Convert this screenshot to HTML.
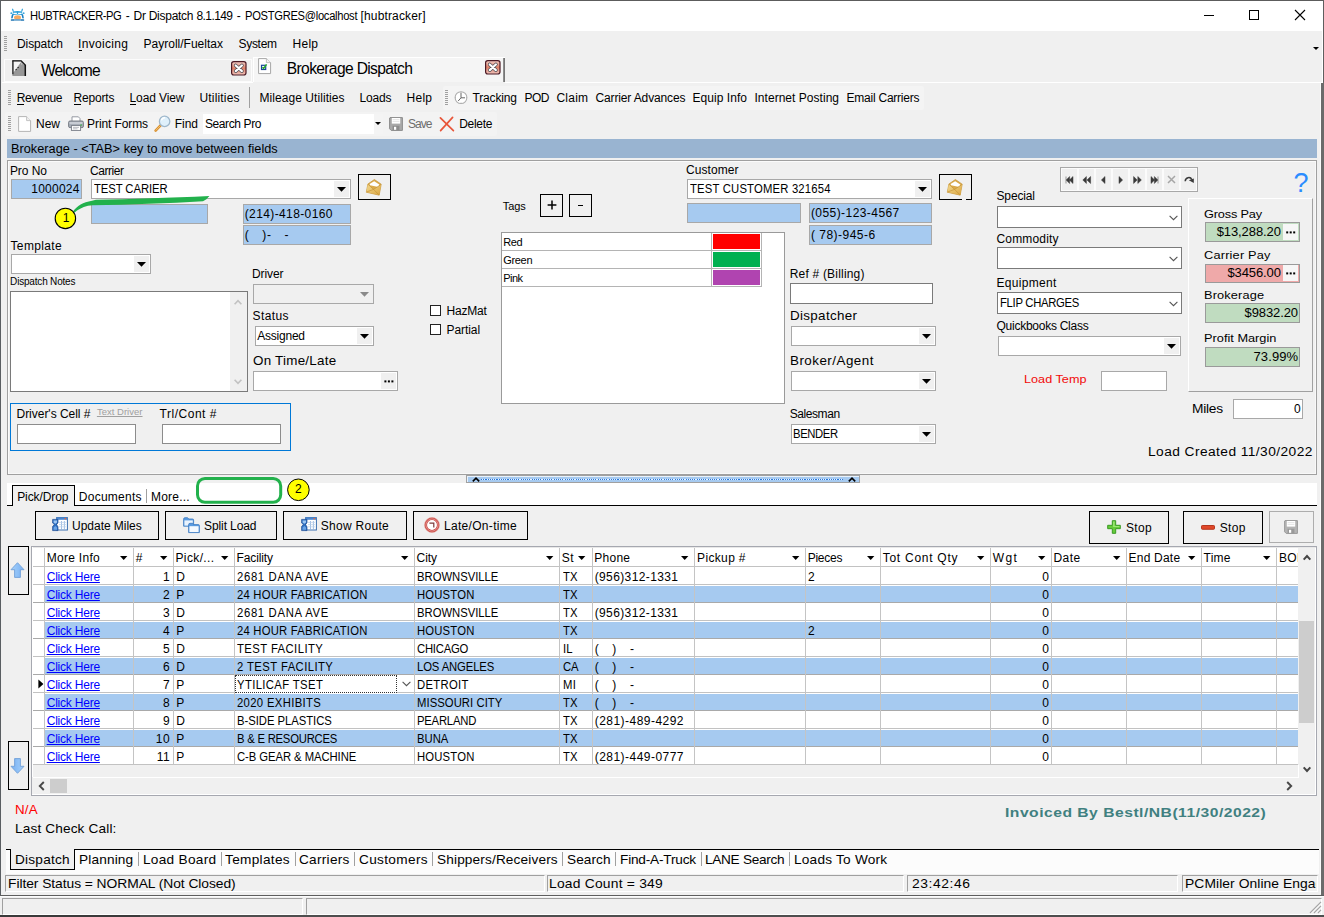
<!DOCTYPE html>
<html><head><meta charset="utf-8"><title>Dr Dispatch</title><style>html,body{margin:0;padding:0}
body{width:1324px;height:917px;overflow:hidden;position:relative;background:#f0f0f0;font-family:"Liberation Sans",sans-serif}
.b{position:absolute;box-sizing:border-box;display:block}
.t{position:absolute;white-space:pre;font-family:"Liberation Sans",sans-serif}
svg{overflow:visible}</style></head><body>
<div class="b " style="left:0px;top:0px;width:1324px;height:917px;background:#f0f0f0;"></div>
<div class="b " style="left:0px;top:0px;width:1324px;height:31px;background:#fff;"></div>
<div class="b " style="left:0px;top:0px;width:1324px;height:1px;background:#5c5c5c;"></div>
<div class="b " style="left:0px;top:0px;width:1.3px;height:896px;background:#5a5e62;"></div>
<div class="b " style="left:1323px;top:0px;width:1px;height:82px;background:#5f5f5f;"></div>
<div class="b " style="left:1321px;top:82px;width:3px;height:814px;background:#6b6b6b;"></div>
<div class="b " style="left:1322px;top:1px;width:1px;height:81px;background:#fff;"></div>
<div class="b " style="left:1320.2px;top:82px;width:0.8px;height:812px;background:#fafafa;"></div>
<svg class="b" style="left:10px;top:8px" width="15" height="14" viewBox="0 0 15 14">
<path d="M3.2 3.2L2.6 1.2M11.8 3.2L12.4 1.2" stroke="#2a9fd8" stroke-width="1.2" stroke-linecap="round"/>
<path d="M3 3.6Q7.5 2.2 12 3.6L12.6 7.2Q7.5 6 2.4 7.2Z" fill="#2a9fd8"/>
<path d="M3.4 4.7H6.9V6.1H3.3ZM8.1 4.7H11.6L11.7 6.1H8.1Z" fill="#fff"/>
<circle cx="1.3" cy="5.2" r="0.9" fill="#3aa6dc"/><circle cx="13.7" cy="5.2" r="0.9" fill="#3aa6dc"/>
<path d="M2.6 7L2 9.6M12.4 7L13 9.6" stroke="#1b7fc0" stroke-width="1.6" stroke-linecap="round"/>
<ellipse cx="7.5" cy="9.6" rx="3.5" ry="2.4" fill="#f5a960"/>
<path d="M1.6 12H13.4" stroke="#1a72b2" stroke-width="1.7" stroke-linecap="round"/>
<path d="M4 12.1H11" stroke="#9cc4e0" stroke-width="1.2"/>
</svg>
<span class="t" style="font-size:12px;line-height:16px;top:8.2px;color:#000;letter-spacing:-0.442px;left:30px;transform:scaleX(0.93);transform-origin:0 50%;">HUBTRACKER-PG</span>
<span class="t" style="font-size:12px;line-height:16px;top:8.2px;color:#000;left:125.8px;">-</span>
<span class="t" style="font-size:12px;line-height:16px;top:8.2px;color:#000;letter-spacing:-0.268px;left:133.5px;">Dr Dispatch</span>
<span class="t" style="font-size:12px;line-height:16px;top:8.2px;color:#000;letter-spacing:-0.590px;left:196.5px;">8.1.149</span>
<span class="t" style="font-size:12px;line-height:16px;top:8.2px;color:#000;left:236.7px;">-</span>
<span class="t" style="font-size:12px;line-height:16px;top:8.2px;color:#000;letter-spacing:-0.309px;left:244.5px;transform:scaleX(0.93);transform-origin:0 50%;">POSTGRES@localhost</span>
<span class="t" style="font-size:12px;line-height:16px;top:8.2px;color:#000;letter-spacing:0.149px;left:360.5px;">[hubtracker]</span>
<div class="b " style="left:1204px;top:15px;width:10px;height:1px;background:#000;"></div>
<div class="b " style="left:1249px;top:10px;width:10px;height:10px;border:1px solid #000;"></div>
<svg class="b" style="left:1294px;top:9px" width="12" height="12" viewBox="0 0 12 12"><path d="M1 1L11 11M11 1L1 11" stroke="#000" stroke-width="1.1"/></svg>
<div class="b " style="left:4px;top:36px;width:3px;height:15px;background:repeating-linear-gradient(to bottom,#a0a0a0 0,#a0a0a0 1px,transparent 1px,transparent 2px);"></div>
<span class="t" style="font-size:12px;line-height:16px;top:35.6px;color:#000;letter-spacing:-0.098px;left:17px;">Dispatch</span>
<span class="t" style="font-size:12px;line-height:16px;top:35.6px;color:#000;letter-spacing:0.330px;left:78px;">Invoicing</span>
<span class="t" style="font-size:12px;line-height:16px;top:35.6px;color:#000;letter-spacing:0.010px;left:143.5px;">Payroll/Fueltax</span>
<span class="t" style="font-size:12px;line-height:16px;top:35.6px;color:#000;letter-spacing:-0.302px;left:238.5px;">System</span>
<span class="t" style="font-size:12px;line-height:16px;top:35.6px;color:#000;letter-spacing:0.273px;left:292.5px;">Help</span>
<div class="b " style="left:78.5px;top:49.6px;width:3.5px;height:1px;background:#000;"></div>
<svg class="b" style="left:1312.5px;top:47px" width="6" height="3" viewBox="0 0 6 3"><path d="M0 0H6L3 3Z" fill="#000"/></svg>
<div class="b " style="left:4px;top:58.6px;width:248.4px;height:23.6px;background:#efefef;border:1px solid #fcfcfc;"></div>
<div class="b " style="left:253px;top:57px;width:252px;height:25px;background:#f5f5f5;border-top:1px solid #fff;border-left:1px solid #fff;"></div>
<div class="b " style="left:503.4px;top:57.6px;width:2px;height:24.4px;background:linear-gradient(90deg,#9a9a9a,#6a6a6a);"></div>
<div class="b " style="left:2px;top:81.5px;width:251px;height:1px;background:#fff;"></div>
<div class="b " style="left:505px;top:81.5px;width:818px;height:1px;background:#fff;"></div>
<svg class="b" style="left:12px;top:60px" width="15" height="17" viewBox="0 0 15 17"><path d="M0.4 16V0.6H9L13.9 5.3V16Z" fill="#979797"/>
<path d="M1.5 1.6H9.4L1.5 12.6Z" fill="#f4f4f4"/>
<path d="M1.5 1.7H9" stroke="#f2f2f2" stroke-width="0.9"/>
<path d="M0.9 0.4V14.2" stroke="#111" stroke-width="1.1"/>
<path d="M0.4 0.9H9.2L13.4 5.1" fill="none" stroke="#111" stroke-width="1.3"/>
<path d="M13.3 4.8V16" stroke="#111" stroke-width="1.5"/>
<rect x="3.6" y="9" width="1.1" height="1.1" fill="#111"/><rect x="5.6" y="7" width="1.1" height="1.1" fill="#111"/>
<rect x="9.2" y="3.4" width="1" height="1" fill="#eee"/></svg>
<span class="t" style="font-size:15.6px;line-height:20px;top:61px;color:#000;letter-spacing:-0.822px;left:40.9px;">Welcome</span>
<svg class="b" style="left:231px;top:60.6px" width="16" height="15" viewBox="0 0 16 15"><defs><linearGradient id="cx231" x1="0" x2="0" y1="0" y2="1"><stop offset="0" stop-color="#f3cfc8"/><stop offset="0.5" stop-color="#de8068"/><stop offset="1" stop-color="#f0c4bc"/></linearGradient></defs>
<rect x="0.6" y="0.6" width="14.4" height="13.4" rx="2.2" fill="url(#cx231)" stroke="#4c1a24" stroke-width="1.2"/>
<path d="M4.7 4.5L10.9 10.1M10.9 4.5L4.7 10.1" stroke="#4a4a52" stroke-width="3.6" stroke-linecap="round"/>
<path d="M4.7 4.5L10.9 10.1M10.9 4.5L4.7 10.1" stroke="#fff" stroke-width="2.2" stroke-linecap="round"/></svg>
<svg class="b" style="left:485px;top:59.8px" width="16" height="15" viewBox="0 0 16 15"><defs><linearGradient id="cx485" x1="0" x2="0" y1="0" y2="1"><stop offset="0" stop-color="#f3cfc8"/><stop offset="0.5" stop-color="#de8068"/><stop offset="1" stop-color="#f0c4bc"/></linearGradient></defs>
<rect x="0.6" y="0.6" width="14.4" height="13.4" rx="2.2" fill="url(#cx485)" stroke="#4c1a24" stroke-width="1.2"/>
<path d="M4.7 4.5L10.9 10.1M10.9 4.5L4.7 10.1" stroke="#4a4a52" stroke-width="3.6" stroke-linecap="round"/>
<path d="M4.7 4.5L10.9 10.1M10.9 4.5L4.7 10.1" stroke="#fff" stroke-width="2.2" stroke-linecap="round"/></svg>
<svg class="b" style="left:258px;top:58px" width="14" height="16.4" viewBox="0 0 14 16.4"><path d="M0.6 0.6H8.4L12.6 4.6V15.6H0.6Z" fill="#fff" stroke="#a6a6a6" stroke-width="1"/>
<path d="M8.4 0.6V4.6H12.6" fill="#f2f2f2" stroke="#b4b4b4" stroke-width="0.8"/>
<rect x="3.5" y="7.3" width="4.2" height="4.2" fill="#fff" stroke="#18449a" stroke-width="1.2"/>
<path d="M4.4 9.2L5.6 10.4L8.6 6.4" fill="none" stroke="#25aa2a" stroke-width="1.5"/></svg>
<span class="t" style="font-size:15.6px;line-height:20px;top:59px;color:#000;letter-spacing:-0.642px;left:286.8px;">Brokerage Dispatch</span>
<div class="b " style="left:443px;top:85.6px;width:481px;height:24.2px;background:#f4f4f4;border-radius:2px;"></div>
<div class="b " style="left:8px;top:90px;width:3px;height:15px;background:repeating-linear-gradient(to bottom,#a0a0a0 0,#a0a0a0 1px,transparent 1px,transparent 2px);"></div>
<div class="b " style="left:445px;top:90px;width:3px;height:15px;background:repeating-linear-gradient(to bottom,#a0a0a0 0,#a0a0a0 1px,transparent 1px,transparent 2px);"></div>
<span class="t" style="font-size:12px;line-height:16px;top:89.7px;color:#000;letter-spacing:-0.373px;left:16.7px;">Revenue</span>
<span class="t" style="font-size:12px;line-height:16px;top:89.7px;color:#000;letter-spacing:-0.170px;left:73.5px;">Reports</span>
<span class="t" style="font-size:12px;line-height:16px;top:89.7px;color:#000;letter-spacing:-0.103px;left:129.5px;">Load View</span>
<span class="t" style="font-size:12px;line-height:16px;top:89.7px;color:#000;letter-spacing:0.166px;left:199.5px;">Utilities</span>
<span class="t" style="font-size:12px;line-height:16px;top:89.7px;color:#000;letter-spacing:0.061px;left:259.5px;">Mileage Utilities</span>
<span class="t" style="font-size:12px;line-height:16px;top:89.7px;color:#000;letter-spacing:-0.174px;left:359.5px;">Loads</span>
<span class="t" style="font-size:12px;line-height:16px;top:89.7px;color:#000;letter-spacing:0.273px;left:406.5px;">Help</span>
<span class="t" style="font-size:12px;line-height:16px;top:89.7px;color:#000;letter-spacing:-0.153px;left:472.5px;">Tracking</span>
<span class="t" style="font-size:12px;line-height:16px;top:89.7px;color:#000;letter-spacing:-0.502px;left:524.5px;">POD</span>
<span class="t" style="font-size:12px;line-height:16px;top:89.7px;color:#000;letter-spacing:0.208px;left:556.5px;">Claim</span>
<span class="t" style="font-size:12px;line-height:16px;top:89.7px;color:#000;letter-spacing:-0.136px;left:595.5px;">Carrier Advances</span>
<span class="t" style="font-size:12px;line-height:16px;top:89.7px;color:#000;letter-spacing:0.051px;left:692.5px;">Equip Info</span>
<span class="t" style="font-size:12px;line-height:16px;top:89.7px;color:#000;letter-spacing:0.030px;left:754.5px;">Internet Posting</span>
<span class="t" style="font-size:12px;line-height:16px;top:89.7px;color:#000;letter-spacing:-0.231px;left:846.5px;">Email Carriers</span>
<div class="b " style="left:17.3px;top:103.6px;width:7px;height:1px;background:#000;"></div>
<div class="b " style="left:74.2px;top:103.6px;width:7px;height:1px;background:#000;"></div>
<div class="b " style="left:130.2px;top:103.6px;width:5.5px;height:1px;background:#000;"></div>
<div class="b " style="left:249px;top:87px;width:1px;height:21px;background:#a0a0a0;"></div>
<svg class="b" style="left:454px;top:90px" width="14" height="15" viewBox="0 0 14 15"><circle cx="7" cy="7.6" r="5.9" fill="#fff" stroke="#b0b0b0" stroke-width="1.1"/>
<path d="M7 2.8V7.8H11M7 7.8L4.2 11" fill="none" stroke="#666" stroke-width="1"/>
<path d="M7 1.8V2.6M7 12.6V13.4M1.2 7.6H2M12 7.6H12.8" stroke="#aaa" stroke-width="0.8"/></svg>
<div class="b " style="left:5px;top:111.6px;width:492px;height:24.6px;background:#f3f3f3;border-radius:2px;"></div>
<div class="b " style="left:8px;top:116px;width:3px;height:15px;background:repeating-linear-gradient(to bottom,#a0a0a0 0,#a0a0a0 1px,transparent 1px,transparent 2px);"></div>
<svg class="b" style="left:18px;top:116px" width="14" height="16" viewBox="0 0 14 16"><path d="M0.6 0.6H8.6L12.6 4.6V15.4H0.6Z" fill="#fff" stroke="#b4b4b4" stroke-width="1"/>
<path d="M8.6 0.6V4.6H12.6" fill="#f0f0f0" stroke="#bcbcbc" stroke-width="0.9"/></svg>
<span class="t" style="font-size:12px;line-height:16px;top:115.8px;color:#000;letter-spacing:-0.053px;left:36.1px;">New</span>
<svg class="b" style="left:67.5px;top:116px" width="16" height="15" viewBox="0 0 16 15"><path d="M4 0.8H10.4L12 2.6V6H4Z" fill="#fff" stroke="#8a8f98" stroke-width="0.9"/>
<rect x="0.6" y="5" width="14.8" height="6.6" rx="1.4" fill="#a8aeb8" stroke="#70757e" stroke-width="0.9"/>
<rect x="1.6" y="6" width="12.8" height="2" fill="#c8ccd4"/>
<rect x="3.4" y="9.6" width="9.2" height="4.8" fill="#fff" stroke="#777c86" stroke-width="0.9"/>
<path d="M5 11.4H11M5 12.8H9.5" stroke="#a0a4ac" stroke-width="0.7"/>
<rect x="12.4" y="8.4" width="1.5" height="1.3" fill="#3cb44a"/></svg>
<span class="t" style="font-size:12px;line-height:16px;top:115.8px;color:#000;letter-spacing:-0.100px;left:87.1px;">Print Forms</span>
<svg class="b" style="left:154px;top:115px" width="17" height="17" viewBox="0 0 17 17"><path d="M6.8 10.2L1.6 15.6" stroke="#d9902f" stroke-width="2.6" stroke-linecap="round"/>
<path d="M6.2 10.8L2 15.2" stroke="#f2c070" stroke-width="1" stroke-linecap="round"/>
<circle cx="10.6" cy="6.4" r="5.2" fill="#dff0fb" stroke="#9fb8cc" stroke-width="1.3"/>
<path d="M7.4 5.4A3.6 3.6 0 0 1 11 2.8" fill="none" stroke="#fff" stroke-width="1.4"/></svg>
<span class="t" style="font-size:12px;line-height:16px;top:115.8px;color:#000;letter-spacing:-0.081px;left:174.8px;">Find</span>
<div class="b " style="left:202.6px;top:114px;width:171.4px;height:19.5px;background:#fff;"></div>
<div class="b " style="left:374px;top:114px;width:9.4px;height:19.5px;background:#f4f4f4;"></div>
<span class="t" style="font-size:12px;line-height:16px;top:115.8px;color:#000;letter-spacing:-0.381px;left:204.9px;">Search Pro</span>
<svg class="b" style="left:375.4px;top:122.1px" width="6" height="3" viewBox="0 0 6 3"><path d="M0 0H6L3 3Z" fill="#000"/></svg>
<svg class="b" style="left:389px;top:116.5px" width="14" height="14" viewBox="0 0 14 14"><path d="M1 0.6H13.4V13.4H2.2L0.6 11.8V1Z" fill="#a9a9a9" stroke="#8c8c8c" stroke-width="1"/>
<rect x="2.8" y="1" width="8.4" height="5.6" fill="#fff"/>
<path d="M3.6 2.6H10.4M3.6 4.4H10.4" stroke="#dedede" stroke-width="0.8"/>
<rect x="3.6" y="8.8" width="6.8" height="4.6" fill="#8c8c8c"/><rect x="5" y="9.8" width="2.2" height="3" fill="#fff"/></svg>
<span class="t" style="font-size:12px;line-height:16px;top:115.8px;color:#6d6d6d;letter-spacing:-0.984px;left:408px;">Save</span>
<svg class="b" style="left:439px;top:116px" width="16" height="16" viewBox="0 0 16 16"><path d="M1.4 1.8L14.4 14.6M13.6 1.4L1.6 14.6" stroke="#e8563a" stroke-width="1.7" stroke-linecap="round"/></svg>
<span class="t" style="font-size:12px;line-height:16px;top:115.8px;color:#000;letter-spacing:-0.277px;left:459.2px;">Delete</span>
<div class="b " style="left:7px;top:139px;width:1310px;height:18.8px;background:#99b4d1;"></div>
<span class="t" style="font-size:12px;line-height:16px;top:141.4px;color:#000;letter-spacing:0.024px;left:10.8px;transform:scaleX(1.06);transform-origin:0 50%;">Brokerage - &lt;TAB&gt; key to move between fields</span>
<div class="b " style="left:7px;top:160px;width:1310px;height:315.4px;border:1px solid #a0a0a0;box-shadow:inset 1px 1px 0 #fbfbfb, inset -1px -1px 0 #f8f8f8;"></div>
<span class="t" style="font-size:12px;line-height:16px;top:163px;color:#000;letter-spacing:-0.050px;left:9.9px;">Pro No</span>
<span class="t" style="font-size:12px;line-height:16px;top:163px;color:#000;letter-spacing:-0.461px;left:90.1px;">Carrier</span>
<div class="b " style="left:10.8px;top:179.4px;width:71.4px;height:19.4px;background:#a6caf0;border:1px solid #a8a8a8;"></div>
<span class="t" style="font-size:12px;line-height:16px;top:180.6px;color:#000;letter-spacing:0.231px;left:31.3px;">1000024</span>
<div class="b " style="left:90.6px;top:179.4px;width:260px;height:19.4px;background:#fff;border:1px solid #a8a8a8;"></div>
<div class="b " style="left:333.8px;top:181.4px;width:14.8px;height:15.4px;background:#f0f0f0;"></div>
<svg class="b" style="left:336.8px;top:187.1px" width="9" height="4.8" viewBox="0 0 9 4.8"><path d="M0 0H9L4.5 4.8Z" fill="#000"/></svg>
<span class="t" style="font-size:12px;line-height:16px;top:180.9px;color:#000;letter-spacing:-0.083px;left:93.9px;transform:scaleX(0.94);transform-origin:0 50%;">TEST CARIER</span>
<div class="b " style="left:358px;top:174px;width:33px;height:26px;background:#f0f0f0;border:1px solid #000;"></div>
<svg class="b" style="left:365.8px;top:178.5px" width="16" height="17" viewBox="0 0 16 17"><defs><linearGradient id="mg358" x1="0" y1="0" x2="1" y2="1"><stop offset="0" stop-color="#f3d98e"/><stop offset="1" stop-color="#d9a440"/></linearGradient></defs>
<path d="M1.9 5L8.4 0.5L15.2 5.2L13.2 16.2L0.3 13.2Z" fill="#dcaa48" stroke="#c4933a" stroke-width="0.7"/>
<path d="M3.6 5L8.2 2.3L13.3 5.5L12.4 8L4 6.2Z" fill="#fff"/>
<path d="M1.9 5.2L7.6 10.4L15.1 5.4L13.2 16.1L0.4 13.1Z" fill="url(#mg358)"/>
<path d="M1.9 5.2L7.6 10.4L15.1 5.4M0.5 13L7.6 10.4L13.1 16" fill="none" stroke="#c4933a" stroke-width="0.7"/>
</svg>
<div class="b " style="left:91px;top:204.2px;width:117px;height:19.6px;background:#a6caf0;border:1px solid #a8a8a8;"></div>
<div class="b " style="left:243px;top:204.2px;width:107.8px;height:19.6px;background:#a6caf0;border:1px solid #a8a8a8;"></div>
<span class="t" style="font-size:12px;line-height:16px;top:205.8px;color:#000;letter-spacing:0.391px;left:244.7px;">(214)-418-0160</span>
<div class="b " style="left:243px;top:225.2px;width:107.8px;height:19.6px;background:#a6caf0;border:1px solid #a8a8a8;"></div>
<span class="t" style="font-size:12px;line-height:16px;top:227px;color:#000;letter-spacing:0.868px;left:244.7px;">(   )-   -</span>
<svg class="b" style="left:50px;top:190px" width="170" height="42" viewBox="0 0 170 42"><path d="M23 21.6C27 16 33 12.2 42 10.8L46 9.7C80 9.2 120 7.8 159.4 6L156.4 9.2L153 11.3C118 13.4 80 14.6 42.6 15.3L38 15.8C32 17.2 27.6 19.8 24.4 22.8Z" fill="#22b14c"/>
<circle cx="15.4" cy="28.4" r="10.2" fill="#ffff00" stroke="#000" stroke-width="1.1"/></svg>
<span class="t" style="font-size:12px;line-height:16px;top:210.2px;color:#000;left:62.7px;">1</span>
<span class="t" style="font-size:12px;line-height:16px;top:237.6px;color:#000;letter-spacing:0.358px;left:10.5px;">Template</span>
<div class="b " style="left:10.8px;top:254.4px;width:139.8px;height:19.2px;background:#fff;border:1px solid #a8a8a8;"></div>
<div class="b " style="left:133.8px;top:256.4px;width:14.8px;height:15.2px;background:#f0f0f0;"></div>
<svg class="b" style="left:136.8px;top:262px" width="9" height="4.8" viewBox="0 0 9 4.8"><path d="M0 0H9L4.5 4.8Z" fill="#000"/></svg>
<span class="t" style="font-size:10px;line-height:16px;top:274px;color:#000;letter-spacing:-0.186px;left:10.1px;">Dispatch Notes</span>
<div class="b " style="left:10px;top:291px;width:238px;height:100.6px;background:#fff;border:1px solid #7a7a7a;"></div>
<div class="b " style="left:230.4px;top:292px;width:16.6px;height:98.6px;background:#f0f0f0;"></div>
<svg class="b" style="left:233.6px;top:299px" width="8" height="6" viewBox="0 0 8 6"><path d="M0.6 5.2L4 1.6L7.4 5.2" fill="none" stroke="#c2c2c2" stroke-width="1.6"/></svg>
<svg class="b" style="left:233.6px;top:378.6px" width="8" height="6" viewBox="0 0 8 6"><path d="M0.6 0.8L4 4.4L7.4 0.8" fill="none" stroke="#c2c2c2" stroke-width="1.6"/></svg>
<span class="t" style="font-size:12px;line-height:16px;top:265.6px;color:#000;letter-spacing:-0.080px;left:251.9px;">Driver</span>
<div class="b " style="left:253px;top:284.2px;width:120.8px;height:19.6px;background:#f0f0f0;border:1px solid #a8a8a8;"></div>
<svg class="b" style="left:360px;top:292px" width="9" height="4.8" viewBox="0 0 9 4.8"><path d="M0 0H9L4.5 4.8Z" fill="#8a8a8a"/></svg>
<span class="t" style="font-size:12px;line-height:16px;top:308.2px;color:#000;letter-spacing:0.396px;left:252.5px;">Status</span>
<div class="b " style="left:254.8px;top:326px;width:119px;height:19.8px;background:#fff;border:1px solid #a8a8a8;"></div>
<div class="b " style="left:357px;top:328px;width:14.8px;height:15.8px;background:#f0f0f0;"></div>
<svg class="b" style="left:360px;top:333.9px" width="9" height="4.8" viewBox="0 0 9 4.8"><path d="M0 0H9L4.5 4.8Z" fill="#000"/></svg>
<span class="t" style="font-size:12px;line-height:16px;top:327.7px;color:#000;letter-spacing:-0.238px;left:257.3px;">Assigned</span>
<span class="t" style="font-size:12.2px;line-height:16px;top:353px;color:#000;letter-spacing:0.216px;left:252.5px;transform:scaleX(1.1);transform-origin:0 50%;">On Time/Late</span>
<div class="b " style="left:253px;top:371.4px;width:144.8px;height:19.2px;background:#fff;border:1px solid #a8a8a8;"></div>
<div class="b " style="left:380.8px;top:373.2px;width:15px;height:15.6px;background:#f0f0f0;"></div>
<svg class="b" style="left:383.6px;top:380.2px" width="10" height="3" viewBox="0 0 10 3"><rect x="0.4" y="0.4" width="2" height="2" fill="#000"/><rect x="3.9" y="0.4" width="2" height="2" fill="#000"/><rect x="7.4" y="0.4" width="2" height="2" fill="#000"/></svg>
<div class="b " style="left:10px;top:403px;width:281px;height:48.4px;border:1px solid #0078d7;"></div>
<span class="t" style="font-size:12px;line-height:16px;top:405.8px;color:#000;letter-spacing:-0.022px;left:16.5px;">Driver's Cell #</span>
<span class="t" style="font-size:9.5px;line-height:16px;top:403.6px;color:#a0a0a0;letter-spacing:0.021px;text-decoration:underline;left:96.9px;">Text Driver</span>
<span class="t" style="font-size:12px;line-height:16px;top:405.8px;color:#000;letter-spacing:0.529px;left:159.5px;">Trl/Cont #</span>
<div class="b " style="left:17px;top:424.2px;width:119.2px;height:19.6px;background:#fff;border:1px solid #8c8c8c;"></div>
<div class="b " style="left:162px;top:424.2px;width:119px;height:19.6px;background:#fff;border:1px solid #8c8c8c;"></div>
<div class="b " style="left:430.2px;top:305.4px;width:10.4px;height:10.4px;background:#fff;border:1px solid #222;"></div>
<span class="t" style="font-size:12px;line-height:16px;top:302.8px;color:#000;letter-spacing:-0.189px;left:446.5px;">HazMat</span>
<div class="b " style="left:430.2px;top:324.4px;width:10.4px;height:10.4px;background:#fff;border:1px solid #222;"></div>
<span class="t" style="font-size:12px;line-height:16px;top:321.8px;color:#000;letter-spacing:-0.069px;left:446.5px;">Partial</span>
<span class="t" style="font-size:11px;line-height:16px;top:198px;color:#000;letter-spacing:-0.078px;left:502.8px;">Tags</span>
<div class="b " style="left:540px;top:194px;width:23.4px;height:22.8px;background:#f0f0f0;border:1px solid #000;"></div>
<svg class="b" style="left:546.6px;top:200.4px" width="10" height="10" viewBox="0 0 10 10"><path d="M5 0.6V9.4M0.6 5H9.4" stroke="#000" stroke-width="1.5"/></svg>
<div class="b " style="left:568.8px;top:194px;width:23.4px;height:22.8px;background:#f0f0f0;border:1px solid #000;"></div>
<div class="b " style="left:578.4px;top:205px;width:4.4px;height:1.2px;background:#000;"></div>
<div class="b " style="left:500.8px;top:232px;width:284.4px;height:172px;background:#fff;border:1px solid #9a9a9a;"></div>
<div class="b " style="left:501.8px;top:250px;width:260.2px;height:1px;background:#b4b4b4;"></div>
<div class="b " style="left:712.8px;top:234.2px;width:47.6px;height:15px;background:#ff0000;"></div>
<span class="t" style="font-size:11px;line-height:16px;top:233.8px;color:#000;letter-spacing:-0.389px;left:503.3px;">Red</span>
<div class="b " style="left:501.8px;top:267.85px;width:260.2px;height:1px;background:#b4b4b4;"></div>
<div class="b " style="left:712.8px;top:252.05px;width:47.6px;height:15px;background:#00b050;"></div>
<span class="t" style="font-size:11px;line-height:16px;top:251.65px;color:#000;letter-spacing:-0.343px;left:503.3px;">Green</span>
<div class="b " style="left:501.8px;top:285.7px;width:260.2px;height:1px;background:#b4b4b4;"></div>
<div class="b " style="left:712.8px;top:269.9px;width:47.6px;height:15px;background:#b044b0;"></div>
<span class="t" style="font-size:11px;line-height:16px;top:269.5px;color:#000;letter-spacing:-0.533px;left:503.3px;">Pink</span>
<div class="b " style="left:711px;top:233px;width:1px;height:54.4px;background:#b4b4b4;"></div>
<div class="b " style="left:761.4px;top:233px;width:1px;height:54.4px;background:#b4b4b4;"></div>
<span class="t" style="font-size:12px;line-height:16px;top:161.6px;color:#000;letter-spacing:0.055px;left:686.1px;">Customer</span>
<div class="b " style="left:686.8px;top:179.4px;width:245.2px;height:19.4px;background:#fff;border:1px solid #a8a8a8;"></div>
<div class="b " style="left:915.2px;top:181.4px;width:14.8px;height:15.4px;background:#f0f0f0;"></div>
<svg class="b" style="left:918.2px;top:187.1px" width="9" height="4.8" viewBox="0 0 9 4.8"><path d="M0 0H9L4.5 4.8Z" fill="#000"/></svg>
<span class="t" style="font-size:12px;line-height:16px;top:180.9px;color:#000;letter-spacing:0.203px;left:690.3px;transform:scaleX(0.94);transform-origin:0 50%;">TEST CUSTOMER 321654</span>
<div class="b " style="left:939px;top:174px;width:33px;height:26px;background:#f0f0f0;border:1px solid #000;"></div>
<svg class="b" style="left:946.8px;top:178.5px" width="16" height="17" viewBox="0 0 16 17"><defs><linearGradient id="mg939" x1="0" y1="0" x2="1" y2="1"><stop offset="0" stop-color="#f3d98e"/><stop offset="1" stop-color="#d9a440"/></linearGradient></defs>
<path d="M1.9 5L8.4 0.5L15.2 5.2L13.2 16.2L0.3 13.2Z" fill="#dcaa48" stroke="#c4933a" stroke-width="0.7"/>
<path d="M3.6 5L8.2 2.3L13.3 5.5L12.4 8L4 6.2Z" fill="#fff"/>
<path d="M1.9 5.2L7.6 10.4L15.1 5.4L13.2 16.1L0.4 13.1Z" fill="url(#mg939)"/>
<path d="M1.9 5.2L7.6 10.4L15.1 5.4M0.5 13L7.6 10.4L13.1 16" fill="none" stroke="#c4933a" stroke-width="0.7"/>
</svg>
<div class="b " style="left:962px;top:198.6px;width:4px;height:1.6px;background:#f0f0f0;"></div>
<div class="b " style="left:686.8px;top:203.4px;width:114px;height:19.6px;background:#a6caf0;border:1px solid #a8a8a8;"></div>
<div class="b " style="left:808.6px;top:203.4px;width:123.4px;height:19.6px;background:#a6caf0;border:1px solid #a8a8a8;"></div>
<span class="t" style="font-size:12px;line-height:16px;top:205.2px;color:#000;letter-spacing:0.437px;left:810.9px;">(055)-123-4567</span>
<div class="b " style="left:808.6px;top:225.2px;width:123.4px;height:19.4px;background:#a6caf0;border:1px solid #a8a8a8;"></div>
<span class="t" style="font-size:12px;line-height:16px;top:227px;color:#000;letter-spacing:0.494px;left:810.9px;">( 78)-945-6</span>
<span class="t" style="font-size:12px;line-height:16px;top:265.6px;color:#000;letter-spacing:0.198px;left:789.7px;">Ref # (Billing)</span>
<div class="b " style="left:790px;top:283.2px;width:143px;height:21.2px;background:#fff;border:1px solid #7a7a7a;"></div>
<span class="t" style="font-size:12.2px;line-height:16px;top:308px;color:#000;letter-spacing:0.292px;left:789.7px;transform:scaleX(1.1);transform-origin:0 50%;">Dispatcher</span>
<div class="b " style="left:791px;top:326.4px;width:144.6px;height:19.2px;background:#fff;border:1px solid #a8a8a8;"></div>
<div class="b " style="left:918.8px;top:328.4px;width:14.8px;height:15.2px;background:#f0f0f0;"></div>
<svg class="b" style="left:921.8px;top:334px" width="9" height="4.8" viewBox="0 0 9 4.8"><path d="M0 0H9L4.5 4.8Z" fill="#000"/></svg>
<span class="t" style="font-size:12.2px;line-height:16px;top:352.8px;color:#000;letter-spacing:0.426px;left:789.7px;transform:scaleX(1.1);transform-origin:0 50%;">Broker/Agent</span>
<div class="b " style="left:791px;top:370.8px;width:144.6px;height:19.8px;background:#fff;border:1px solid #a8a8a8;"></div>
<div class="b " style="left:918.8px;top:372.8px;width:14.8px;height:15.8px;background:#f0f0f0;"></div>
<svg class="b" style="left:921.8px;top:378.7px" width="9" height="4.8" viewBox="0 0 9 4.8"><path d="M0 0H9L4.5 4.8Z" fill="#000"/></svg>
<span class="t" style="font-size:12px;line-height:16px;top:405.6px;color:#000;letter-spacing:-0.423px;left:789.7px;">Salesman</span>
<div class="b " style="left:791px;top:424px;width:144.6px;height:19.6px;background:#fff;border:1px solid #a8a8a8;"></div>
<div class="b " style="left:918.8px;top:426px;width:14.8px;height:15.6px;background:#f0f0f0;"></div>
<svg class="b" style="left:921.8px;top:431.8px" width="9" height="4.8" viewBox="0 0 9 4.8"><path d="M0 0H9L4.5 4.8Z" fill="#000"/></svg>
<span class="t" style="font-size:12px;line-height:16px;top:425.6px;color:#000;letter-spacing:-0.406px;left:792.9px;transform:scaleX(0.94);transform-origin:0 50%;">BENDER</span>
<div class="b " style="left:1060px;top:167.2px;width:138px;height:24.6px;background:#fbfbfb;border:1px solid #a8a8a8;"></div>
<div class="b " style="left:1062px;top:169.2px;width:15px;height:20.6px;background:#f0f0f0;"></div>
<svg class="b" style="left:1065px;top:175.5px" width="9" height="8" viewBox="0 0 9 8"><path d="M1 0.5V7.5M8 0.5L4.4 4L8 7.5ZM4.6 0.5L1.2 4L4.6 7.5Z" fill="#3a3a3a" stroke="#3a3a3a" stroke-width="0.5"/></svg>
<div class="b " style="left:1079.05px;top:169.2px;width:15px;height:20.6px;background:#f0f0f0;"></div>
<svg class="b" style="left:1082.05px;top:175.5px" width="9" height="8" viewBox="0 0 9 8"><path d="M4.4 0.5L0.8 4L4.4 7.5ZM8.6 0.5L5 4L8.6 7.5Z" fill="#3a3a3a" stroke="#3a3a3a" stroke-width="0.5"/></svg>
<div class="b " style="left:1096.1px;top:169.2px;width:15px;height:20.6px;background:#f0f0f0;"></div>
<svg class="b" style="left:1099.1px;top:175.5px" width="9" height="8" viewBox="0 0 9 8"><path d="M6 0.5L2.4 4L6 7.5Z" fill="#3a3a3a" stroke="#3a3a3a" stroke-width="0.5"/></svg>
<div class="b " style="left:1113.15px;top:169.2px;width:15px;height:20.6px;background:#f0f0f0;"></div>
<svg class="b" style="left:1116.15px;top:175.5px" width="9" height="8" viewBox="0 0 9 8"><path d="M3 0.5L6.6 4L3 7.5Z" fill="#3a3a3a" stroke="#3a3a3a" stroke-width="0.5"/></svg>
<div class="b " style="left:1130.2px;top:169.2px;width:15px;height:20.6px;background:#f0f0f0;"></div>
<svg class="b" style="left:1133.2px;top:175.5px" width="9" height="8" viewBox="0 0 9 8"><path d="M0.6 0.5L4.2 4L0.6 7.5ZM4.8 0.5L8.4 4L4.8 7.5Z" fill="#3a3a3a" stroke="#3a3a3a" stroke-width="0.5"/></svg>
<div class="b " style="left:1147.25px;top:169.2px;width:15px;height:20.6px;background:#f0f0f0;"></div>
<svg class="b" style="left:1150.25px;top:175.5px" width="9" height="8" viewBox="0 0 9 8"><path d="M8 0.5V7.5M1 0.5L4.6 4L1 7.5ZM4.4 0.5L7.8 4L4.4 7.5Z" fill="#3a3a3a" stroke="#3a3a3a" stroke-width="0.5"/></svg>
<div class="b " style="left:1164.3px;top:169.2px;width:15px;height:20.6px;background:#f0f0f0;"></div>
<svg class="b" style="left:1167.3px;top:175px" width="9" height="9" viewBox="0 0 9 9"><path d="M1 1L8 8M8 1L1 8" stroke="#a6a6a6" stroke-width="1.5"/></svg>
<div class="b " style="left:1181.35px;top:169.2px;width:15px;height:20.6px;background:#f0f0f0;"></div>
<svg class="b" style="left:1183.85px;top:174.5px" width="10" height="10" viewBox="0 0 10 10"><path d="M1.2 6.2C1.4 2.2 6.4 1.4 7.8 4.6" fill="none" stroke="#3a3a3a" stroke-width="1.5"/><path d="M4.8 5.2L9.8 3.4V8Z" fill="#3a3a3a"/></svg>
<span class="t" style="font-size:27px;line-height:30px;top:167.8px;color:#2b8cff;left:1293.4px;">?</span>
<span class="t" style="font-size:12px;line-height:16px;top:187.6px;color:#000;letter-spacing:-0.143px;left:996.5px;">Special</span>
<div class="b " style="left:996.6px;top:206px;width:185.2px;height:21.8px;background:#fff;border:1px solid #7a7a7a;"></div>
<svg class="b" style="left:1168.7px;top:214.5px" width="9" height="6" viewBox="0 0 9 6"><path d="M0.6 0.8L4.5 4.7L8.4 0.8" fill="none" stroke="#555" stroke-width="1.1"/></svg>
<span class="t" style="font-size:12px;line-height:16px;top:230.6px;color:#000;letter-spacing:0.165px;left:996.5px;">Commodity</span>
<div class="b " style="left:996.6px;top:247.2px;width:185.2px;height:21.8px;background:#fff;border:1px solid #7a7a7a;"></div>
<svg class="b" style="left:1168.7px;top:255.7px" width="9" height="6" viewBox="0 0 9 6"><path d="M0.6 0.8L4.5 4.7L8.4 0.8" fill="none" stroke="#555" stroke-width="1.1"/></svg>
<span class="t" style="font-size:12px;line-height:16px;top:274.8px;color:#000;letter-spacing:0.304px;left:996.5px;">Equipment</span>
<div class="b " style="left:996.6px;top:292.4px;width:185.2px;height:21.8px;background:#fff;border:1px solid #7a7a7a;"></div>
<svg class="b" style="left:1168.7px;top:300.9px" width="9" height="6" viewBox="0 0 9 6"><path d="M0.6 0.8L4.5 4.7L8.4 0.8" fill="none" stroke="#555" stroke-width="1.1"/></svg>
<span class="t" style="font-size:12px;line-height:16px;top:295.1px;color:#000;letter-spacing:-0.313px;left:999.7px;transform:scaleX(0.94);transform-origin:0 50%;">FLIP CHARGES</span>
<span class="t" style="font-size:12px;line-height:16px;top:317.8px;color:#000;letter-spacing:-0.256px;left:996.5px;">Quickbooks Class</span>
<div class="b " style="left:998px;top:336.2px;width:182.8px;height:19.8px;background:#fff;border:1px solid #a8a8a8;"></div>
<div class="b " style="left:1164px;top:338.2px;width:14.8px;height:15.8px;background:#f0f0f0;"></div>
<svg class="b" style="left:1167px;top:344.1px" width="9" height="4.8" viewBox="0 0 9 4.8"><path d="M0 0H9L4.5 4.8Z" fill="#000"/></svg>
<span class="t" style="font-size:11.5px;line-height:16px;top:371.2px;color:#f20a0a;letter-spacing:0.015px;left:1023.7px;transform:scaleX(1.1);transform-origin:0 50%;">Load Temp</span>
<div class="b " style="left:1101.2px;top:371.4px;width:66px;height:19.6px;background:#fff;border:1px solid #a8a8a8;"></div>
<div class="b " style="left:1188px;top:198px;width:125px;height:194px;border-top:1px solid #fff;border-left:1px solid #fff;border-right:1px solid #a0a0a0;border-bottom:1px solid #a0a0a0;"></div>
<span class="t" style="font-size:11.6px;line-height:16px;top:206.2px;color:#000;letter-spacing:-0.170px;left:1203.9px;transform:scaleX(1.1);transform-origin:0 50%;">Gross Pay</span>
<div class="b " style="left:1204.8px;top:222.4px;width:95.2px;height:19.2px;background:#c0dcc0;border:1px solid #9a9a9a;"></div>
<div class="b " style="left:1283px;top:224px;width:15px;height:16px;background:#f6f6f6;"></div>
<span class="t" style="font-size:13px;line-height:16px;top:223.6px;color:#000;letter-spacing:-0.096px;right:43.2px;">$13,288.20</span>
<svg class="b" style="left:1286px;top:230.6px" width="10" height="3" viewBox="0 0 10 3"><rect x="0.2" y="0.4" width="2" height="2" fill="#000"/><rect x="3.7" y="0.4" width="2" height="2" fill="#000"/><rect x="7.2" y="0.4" width="2" height="2" fill="#000"/></svg>
<span class="t" style="font-size:11.6px;line-height:16px;top:247.2px;color:#000;letter-spacing:0.176px;left:1203.9px;transform:scaleX(1.1);transform-origin:0 50%;">Carrier Pay</span>
<div class="b " style="left:1204.8px;top:263.6px;width:95.2px;height:19.2px;background:#efa9a9;border:1px solid #9a9a9a;"></div>
<div class="b " style="left:1283px;top:265.2px;width:15px;height:16px;background:#f6f6f6;"></div>
<span class="t" style="font-size:13px;line-height:16px;top:264.8px;color:#000;letter-spacing:-0.118px;right:43.22px;">$3456.00</span>
<svg class="b" style="left:1286px;top:271.8px" width="10" height="3" viewBox="0 0 10 3"><rect x="0.2" y="0.4" width="2" height="2" fill="#000"/><rect x="3.7" y="0.4" width="2" height="2" fill="#000"/><rect x="7.2" y="0.4" width="2" height="2" fill="#000"/></svg>
<span class="t" style="font-size:11.6px;line-height:16px;top:287.4px;color:#000;letter-spacing:0.137px;left:1203.9px;transform:scaleX(1.1);transform-origin:0 50%;">Brokerage</span>
<div class="b " style="left:1204.8px;top:303.2px;width:95.2px;height:19.8px;background:#c0dcc0;border:1px solid #9a9a9a;"></div>
<span class="t" style="font-size:13px;line-height:16px;top:304.8px;color:#000;letter-spacing:-0.089px;right:25.99px;">$9832.20</span>
<span class="t" style="font-size:11.6px;line-height:16px;top:330.4px;color:#000;letter-spacing:0.009px;left:1203.9px;transform:scaleX(1.1);transform-origin:0 50%;">Profit Margin</span>
<div class="b " style="left:1204.8px;top:347.2px;width:95.2px;height:19.8px;background:#c0dcc0;border:1px solid #9a9a9a;"></div>
<span class="t" style="font-size:13px;line-height:16px;top:348.6px;color:#000;letter-spacing:0.102px;right:25.8px;">73.99%</span>
<span class="t" style="font-size:12.5px;line-height:16px;top:400.6px;color:#000;letter-spacing:-0.224px;left:1191.9px;transform:scaleX(1.1);transform-origin:0 50%;">Miles</span>
<div class="b " style="left:1233px;top:399.2px;width:70px;height:19.6px;background:#fff;border:1px solid #a8a8a8;"></div>
<span class="t" style="font-size:12px;line-height:16px;top:400.8px;color:#000;right:23.3px;">0</span>
<span class="t" style="font-size:12.5px;line-height:16px;top:443.8px;color:#000;letter-spacing:0.391px;left:1147.5px;transform:scaleX(1.1);transform-origin:0 50%;">Load Created 11/30/2022</span>
<div class="b " style="left:466.2px;top:474.6px;width:394px;height:8.4px;background:#a6caf0;border:1px solid #a0a0a0;box-shadow:inset 1px 1px 0 #e8f2fc;"></div>
<div class="b " style="left:481px;top:478.6px;width:362px;height:1.5px;background:repeating-linear-gradient(90deg,#2878dc 0,#2878dc 1.1px,#eaf4ff 1.1px,#eaf4ff 2.2px);"></div>
<svg class="b" style="left:471.6px;top:476.6px" width="8" height="5" viewBox="0 0 8 5"><path d="M0.8 4.4L4 1.2L7.2 4.4" fill="none" stroke="#000" stroke-width="1.6"/></svg>
<svg class="b" style="left:847.6px;top:476.6px" width="8" height="5" viewBox="0 0 8 5"><path d="M0.8 4.4L4 1.2L7.2 4.4" fill="none" stroke="#000" stroke-width="1.6"/></svg>
<div class="b " style="left:7px;top:483px;width:1310px;height:22px;background:#fff;"></div>
<div class="b " style="left:7px;top:505px;width:1310px;height:1px;background:#000;"></div>
<div class="b " style="left:12px;top:485px;width:63.4px;height:21px;background:#f0f0f0;border:1px solid #000;border-bottom:none;"></div>
<span class="t" style="font-size:12px;line-height:16px;top:489.2px;color:#000;letter-spacing:-0.089px;left:17.2px;">Pick/Drop</span>
<span class="t" style="font-size:12px;line-height:16px;top:489.2px;color:#000;letter-spacing:0.251px;left:78.8px;">Documents</span>
<div class="b " style="left:146px;top:488.5px;width:1px;height:14.5px;background:#a0a0a0;"></div>
<span class="t" style="font-size:12px;line-height:16px;top:489.2px;color:#000;letter-spacing:0.243px;left:150.9px;">More...</span>
<svg class="b" style="left:194px;top:475px" width="120" height="32" viewBox="0 0 120 32"><rect x="3.5" y="3.4" width="83.2" height="23.9" rx="7.5" fill="none" stroke="#22b14c" stroke-width="3"/>
<circle cx="104.4" cy="14.8" r="10.8" fill="#ffff00" stroke="#000" stroke-width="1"/></svg>
<span class="t" style="font-size:12px;line-height:16px;top:481.2px;color:#000;left:294.9px;">2</span>
<div class="b " style="left:35px;top:511.2px;width:124px;height:28.4px;background:#f0f0f0;border:1px solid #000;"></div>
<svg class="b" style="left:52px;top:517px" width="16" height="15" viewBox="0 0 16 15"><rect x="4.6" y="0.6" width="10.8" height="12.4" fill="#fff" stroke="#3a6fb0" stroke-width="1"/>
<rect x="4.6" y="0.6" width="10.8" height="2.2" fill="#4a86d0"/><rect x="12.6" y="1" width="1.6" height="1.3" fill="#e86a3a"/>
<path d="M9.5 4V12.4M12.4 4V12.4" stroke="#8ab0dc" stroke-width="0.8"/><path d="M7 5.4H14M7 7.6H14M7 9.8H14" stroke="#b8cfea" stroke-width="0.7"/>
<path d="M0.6 2.4H6V6L4.2 7.6L6 9.4V13.6H0.6V9.4L2.4 7.6L0.6 6Z" fill="#2f6fc0" stroke="#1c4c94" stroke-width="0.7"/>
<path d="M1.6 3.4H5V5.4L3.3 6.8L1.6 5.4Z" fill="#9cc6f2"/><path d="M1.6 12.8H5V10.4L3.3 9L1.6 10.4Z" fill="#6aa4e6"/></svg>
<span class="t" style="font-size:12px;line-height:16px;top:518.1px;color:#000;letter-spacing:-0.039px;left:72.1px;">Update Miles</span>
<div class="b " style="left:165.4px;top:511.2px;width:111.6px;height:28.4px;background:#f0f0f0;border:1px solid #000;"></div>
<svg class="b" style="left:183.4px;top:516.6px" width="17" height="16.4" viewBox="0 0 17 16.4"><path d="M0.6 2.2Q0.6 0.7 2 0.7H4.6L5.8 2H9.6Q10.6 2 10.6 3V9.2H0.6Z" fill="#5a9be0" stroke="#3b78c0" stroke-width="0.8"/>
<rect x="1.4" y="3.4" width="8.4" height="5.2" fill="#eaf3fd"/>
<path d="M5.6 7.8Q5.6 6.3 7 6.3H9.6L10.8 7.6H15.4Q16.4 7.6 16.4 8.6V15.6H5.6Z" fill="#5a9be0" stroke="#3b78c0" stroke-width="0.8"/>
<rect x="6.4" y="9.2" width="9.2" height="5.8" fill="#f4f9ff"/></svg>
<span class="t" style="font-size:12px;line-height:16px;top:518.1px;color:#000;letter-spacing:-0.108px;left:204.1px;">Split Load</span>
<div class="b " style="left:283px;top:511.2px;width:124px;height:28.4px;background:#f0f0f0;border:1px solid #000;"></div>
<svg class="b" style="left:300.6px;top:517px" width="16" height="15" viewBox="0 0 16 15"><rect x="4.6" y="0.6" width="10.8" height="12.4" fill="#fff" stroke="#3a6fb0" stroke-width="1"/>
<rect x="4.6" y="0.6" width="10.8" height="2.2" fill="#4a86d0"/><rect x="12.6" y="1" width="1.6" height="1.3" fill="#e86a3a"/>
<path d="M9.5 4V12.4M12.4 4V12.4" stroke="#8ab0dc" stroke-width="0.8"/><path d="M7 5.4H14M7 7.6H14M7 9.8H14" stroke="#b8cfea" stroke-width="0.7"/>
<path d="M0.6 2.4H6V6L4.2 7.6L6 9.4V13.6H0.6V9.4L2.4 7.6L0.6 6Z" fill="#2f6fc0" stroke="#1c4c94" stroke-width="0.7"/>
<path d="M1.6 3.4H5V5.4L3.3 6.8L1.6 5.4Z" fill="#9cc6f2"/><path d="M1.6 12.8H5V10.4L3.3 9L1.6 10.4Z" fill="#6aa4e6"/></svg>
<span class="t" style="font-size:12px;line-height:16px;top:518.1px;color:#000;letter-spacing:0.303px;left:320.7px;">Show Route</span>
<div class="b " style="left:413.2px;top:511.2px;width:114.6px;height:28.4px;background:#f0f0f0;border:1px solid #000;"></div>
<svg class="b" style="left:423.6px;top:516.6px" width="16" height="16" viewBox="0 0 16 16"><circle cx="8" cy="8" r="6.2" fill="#fff" stroke="#c63f3a" stroke-width="2.5"/>
<circle cx="8" cy="8" r="6.1" fill="none" stroke="#f3c2bd" stroke-width="0.7"/>
<circle cx="8" cy="8" r="7.5" fill="none" stroke="#e39a94" stroke-width="0.6"/>
<path d="M5.4 6.2H9.8V10.4" fill="none" stroke="#7a3a3a" stroke-width="1.2"/></svg>
<span class="t" style="font-size:12px;line-height:16px;top:518.1px;color:#000;letter-spacing:0.322px;left:443.9px;">Late/On-time</span>
<div class="b " style="left:1089.2px;top:511.4px;width:79.6px;height:32.2px;background:#f0f0f0;border:1px solid #000;"></div>
<svg class="b" style="left:1106.8px;top:520px" width="14" height="14" viewBox="0 0 14 14"><path d="M5.3 0.7H8.7V5.3H13.3V8.7H8.7V13.3H5.3V8.7H0.7V5.3H5.3Z" fill="#66cc3a" stroke="#3a9a24" stroke-width="1"/>
<path d="M6.1 1.6H7.6V6.1H12.4V7H6.1Z" fill="#a4ec7c" opacity="0.85"/></svg>
<span class="t" style="font-size:12px;line-height:16px;top:519.6px;color:#000;letter-spacing:0.371px;left:1125.9px;">Stop</span>
<div class="b " style="left:1183.2px;top:511.4px;width:79.6px;height:32.2px;background:#f0f0f0;border:1px solid #000;"></div>
<svg class="b" style="left:1201px;top:524.6px" width="14" height="5" viewBox="0 0 14 5"><rect x="0.5" y="0.5" width="13" height="3.8" rx="0.8" fill="#e0482a" stroke="#b02c14" stroke-width="0.9"/></svg>
<span class="t" style="font-size:12px;line-height:16px;top:519.6px;color:#000;letter-spacing:0.371px;left:1219.7px;">Stop</span>
<div class="b " style="left:1269px;top:511.4px;width:44.6px;height:31.2px;background:#f0f0f0;border:1px solid #adadad;"></div>
<svg class="b" style="left:1284.2px;top:520px" width="14" height="14" viewBox="0 0 14 14"><path d="M1 0.6H13.4V13.4H2.2L0.6 11.8V1Z" fill="#b4b4b4" stroke="#9a9a9a" stroke-width="1"/>
<rect x="2.8" y="1" width="8.4" height="5.6" fill="#fff"/>
<path d="M3.6 2.6H10.4M3.6 4.4H10.4" stroke="#dedede" stroke-width="0.8"/>
<rect x="3.6" y="8.8" width="6.8" height="4.6" fill="#9a9a9a"/><rect x="5" y="9.8" width="2.2" height="3" fill="#fff"/></svg>
<div class="b " style="left:8px;top:546px;width:21px;height:48.8px;background:#f0f0f0;border:1px solid #000;"></div>
<svg class="b" style="left:10.4px;top:562.4px" width="15" height="16" viewBox="0 0 15 16"><defs><linearGradient id="ag1" x1="0" x2="1"><stop offset="0" stop-color="#a4d0fb"/><stop offset="1" stop-color="#78b0f2"/></linearGradient></defs><path d="M7.5 0.7L14 7.7H10.4V15.4H4.6V7.7H1Z" fill="url(#ag1)" stroke="#6f9fd8" stroke-width="0.9"/></svg>
<div class="b " style="left:8px;top:741px;width:21px;height:49px;background:#f0f0f0;border:1px solid #000;"></div>
<svg class="b" style="left:10.4px;top:758px" width="15" height="16" viewBox="0 0 15 16"><defs><linearGradient id="ag0" x1="0" x2="1"><stop offset="0" stop-color="#a4d0fb"/><stop offset="1" stop-color="#78b0f2"/></linearGradient></defs><path d="M7.5 0.7L14 7.7H10.4V15.4H4.6V7.7H1Z" transform="rotate(180 7.5 8)" fill="url(#ag0)" stroke="#6f9fd8" stroke-width="0.9"/></svg>
<div class="b " style="left:31px;top:546px;width:1286px;height:250px;background:#f0f0f0;border:1px solid #a6a8b0;box-shadow:inset -1px -1px 0 #fff;"></div>
<div class="b " style="left:32px;top:547px;width:1284px;height:1px;background:#e8e8e8;"></div>
<div class="b " style="left:32px;top:547px;width:1px;height:230px;background:#fff;"></div>
<div class="b " style="left:33px;top:548px;width:1265.4px;height:18.6px;background:#fff;"></div>
<div class="b " style="left:33px;top:566.8px;width:1265.4px;height:18px;background:#fff;"></div>
<div class="b " style="left:33px;top:584.8px;width:1265.4px;height:18px;background:#fff;"></div>
<div class="b " style="left:45px;top:586.1px;width:1253.4px;height:16.4px;background:#a6caf0;"></div>
<div class="b " style="left:33px;top:602.8px;width:1265.4px;height:18px;background:#fff;"></div>
<div class="b " style="left:33px;top:620.8px;width:1265.4px;height:18px;background:#fff;"></div>
<div class="b " style="left:45px;top:622.1px;width:1253.4px;height:16.4px;background:#a6caf0;"></div>
<div class="b " style="left:33px;top:638.8px;width:1265.4px;height:18px;background:#fff;"></div>
<div class="b " style="left:33px;top:656.8px;width:1265.4px;height:18px;background:#fff;"></div>
<div class="b " style="left:45px;top:658.1px;width:1253.4px;height:16.4px;background:#a6caf0;"></div>
<div class="b " style="left:33px;top:674.8px;width:1265.4px;height:18px;background:#fff;"></div>
<div class="b " style="left:33px;top:692.8px;width:1265.4px;height:18px;background:#fff;"></div>
<div class="b " style="left:45px;top:694.1px;width:1253.4px;height:16.4px;background:#a6caf0;"></div>
<div class="b " style="left:33px;top:710.8px;width:1265.4px;height:18px;background:#fff;"></div>
<div class="b " style="left:33px;top:728.8px;width:1265.4px;height:18px;background:#fff;"></div>
<div class="b " style="left:45px;top:730.1px;width:1253.4px;height:16.4px;background:#a6caf0;"></div>
<div class="b " style="left:33px;top:746.8px;width:1265.4px;height:18px;background:#fff;"></div>
<div class="b " style="left:33px;top:566px;width:1265.4px;height:1px;background:#c2c2c2;"></div>
<div class="b " style="left:33px;top:584px;width:1265.4px;height:1px;background:#c2c2c2;"></div>
<div class="b " style="left:33px;top:602px;width:1265.4px;height:1px;background:#a9a9a9;"></div>
<div class="b " style="left:33px;top:620px;width:1265.4px;height:1px;background:#c2c2c2;"></div>
<div class="b " style="left:33px;top:638px;width:1265.4px;height:1px;background:#a9a9a9;"></div>
<div class="b " style="left:33px;top:656px;width:1265.4px;height:1px;background:#c2c2c2;"></div>
<div class="b " style="left:33px;top:674px;width:1265.4px;height:1px;background:#a9a9a9;"></div>
<div class="b " style="left:33px;top:692px;width:1265.4px;height:1px;background:#c2c2c2;"></div>
<div class="b " style="left:33px;top:710px;width:1265.4px;height:1px;background:#a9a9a9;"></div>
<div class="b " style="left:33px;top:728px;width:1265.4px;height:1px;background:#c2c2c2;"></div>
<div class="b " style="left:33px;top:746px;width:1265.4px;height:1px;background:#a9a9a9;"></div>
<div class="b " style="left:33px;top:764px;width:1265.4px;height:1px;background:#c2c2c2;"></div>
<div class="b " style="left:44px;top:548px;width:1px;height:216.6px;background:#c4c4c4;"></div>
<div class="b " style="left:133px;top:548px;width:1px;height:216.6px;background:#c4c4c4;"></div>
<div class="b " style="left:172.8px;top:548px;width:1px;height:216.6px;background:#c4c4c4;"></div>
<div class="b " style="left:233.8px;top:548px;width:1px;height:216.6px;background:#c4c4c4;"></div>
<div class="b " style="left:413.8px;top:548px;width:1px;height:216.6px;background:#c4c4c4;"></div>
<div class="b " style="left:559px;top:548px;width:1px;height:216.6px;background:#c4c4c4;"></div>
<div class="b " style="left:591.6px;top:548px;width:1px;height:216.6px;background:#c4c4c4;"></div>
<div class="b " style="left:694.4px;top:548px;width:1px;height:216.6px;background:#c4c4c4;"></div>
<div class="b " style="left:805px;top:548px;width:1px;height:216.6px;background:#c4c4c4;"></div>
<div class="b " style="left:880px;top:548px;width:1px;height:216.6px;background:#c4c4c4;"></div>
<div class="b " style="left:990px;top:548px;width:1px;height:216.6px;background:#c4c4c4;"></div>
<div class="b " style="left:1050.8px;top:548px;width:1px;height:216.6px;background:#c4c4c4;"></div>
<div class="b " style="left:1125.8px;top:548px;width:1px;height:216.6px;background:#c4c4c4;"></div>
<div class="b " style="left:1200.8px;top:548px;width:1px;height:216.6px;background:#c4c4c4;"></div>
<div class="b " style="left:1275.8px;top:548px;width:1px;height:216.6px;background:#c4c4c4;"></div>
<span class="t" style="font-size:12px;line-height:16px;top:549.6px;color:#000;letter-spacing:0.301px;left:46.7px;">More Info</span>
<svg class="b" style="left:119.8px;top:556.2px" width="7.4" height="4" viewBox="0 0 7.4 4"><path d="M0 0H7.4L3.7 4Z" fill="#000"/></svg>
<span class="t" style="font-size:12px;line-height:16px;top:549.6px;color:#000;left:135.7px;">#</span>
<svg class="b" style="left:159.6px;top:556.2px" width="7.4" height="4" viewBox="0 0 7.4 4"><path d="M0 0H7.4L3.7 4Z" fill="#000"/></svg>
<span class="t" style="font-size:12px;line-height:16px;top:549.6px;color:#000;letter-spacing:0.371px;left:175.5px;">Pick/...</span>
<svg class="b" style="left:220.6px;top:556.2px" width="7.4" height="4" viewBox="0 0 7.4 4"><path d="M0 0H7.4L3.7 4Z" fill="#000"/></svg>
<span class="t" style="font-size:12px;line-height:16px;top:549.6px;color:#000;letter-spacing:-0.119px;left:236.5px;">Facility</span>
<svg class="b" style="left:400.6px;top:556.2px" width="7.4" height="4" viewBox="0 0 7.4 4"><path d="M0 0H7.4L3.7 4Z" fill="#000"/></svg>
<span class="t" style="font-size:12px;line-height:16px;top:549.6px;color:#000;letter-spacing:-0.022px;left:416.5px;">City</span>
<svg class="b" style="left:545.8px;top:556.2px" width="7.4" height="4" viewBox="0 0 7.4 4"><path d="M0 0H7.4L3.7 4Z" fill="#000"/></svg>
<span class="t" style="font-size:12px;line-height:16px;top:549.6px;color:#000;letter-spacing:0.462px;left:561.7px;">St</span>
<svg class="b" style="left:578.4px;top:556.2px" width="7.4" height="4" viewBox="0 0 7.4 4"><path d="M0 0H7.4L3.7 4Z" fill="#000"/></svg>
<span class="t" style="font-size:12px;line-height:16px;top:549.6px;color:#000;letter-spacing:0.250px;left:594.3px;">Phone</span>
<svg class="b" style="left:681.2px;top:556.2px" width="7.4" height="4" viewBox="0 0 7.4 4"><path d="M0 0H7.4L3.7 4Z" fill="#000"/></svg>
<span class="t" style="font-size:12px;line-height:16px;top:549.6px;color:#000;letter-spacing:0.339px;left:697.1px;">Pickup #</span>
<svg class="b" style="left:791.8px;top:556.2px" width="7.4" height="4" viewBox="0 0 7.4 4"><path d="M0 0H7.4L3.7 4Z" fill="#000"/></svg>
<span class="t" style="font-size:12px;line-height:16px;top:549.6px;color:#000;letter-spacing:-0.244px;left:807.7px;">Pieces</span>
<svg class="b" style="left:866.8px;top:556.2px" width="7.4" height="4" viewBox="0 0 7.4 4"><path d="M0 0H7.4L3.7 4Z" fill="#000"/></svg>
<span class="t" style="font-size:12px;line-height:16px;top:549.6px;color:#000;letter-spacing:0.737px;left:882.7px;">Tot Cont Qty</span>
<svg class="b" style="left:976.8px;top:556.2px" width="7.4" height="4" viewBox="0 0 7.4 4"><path d="M0 0H7.4L3.7 4Z" fill="#000"/></svg>
<span class="t" style="font-size:12px;line-height:16px;top:549.6px;color:#000;letter-spacing:1.433px;left:992.7px;">Wgt</span>
<svg class="b" style="left:1037.6px;top:556.2px" width="7.4" height="4" viewBox="0 0 7.4 4"><path d="M0 0H7.4L3.7 4Z" fill="#000"/></svg>
<span class="t" style="font-size:12px;line-height:16px;top:549.6px;color:#000;letter-spacing:0.417px;left:1053.5px;">Date</span>
<svg class="b" style="left:1112.6px;top:556.2px" width="7.4" height="4" viewBox="0 0 7.4 4"><path d="M0 0H7.4L3.7 4Z" fill="#000"/></svg>
<span class="t" style="font-size:12px;line-height:16px;top:549.6px;color:#000;letter-spacing:0.224px;left:1128.5px;">End Date</span>
<svg class="b" style="left:1187.6px;top:556.2px" width="7.4" height="4" viewBox="0 0 7.4 4"><path d="M0 0H7.4L3.7 4Z" fill="#000"/></svg>
<span class="t" style="font-size:12px;line-height:16px;top:549.6px;color:#000;letter-spacing:0.260px;left:1203.5px;">Time</span>
<svg class="b" style="left:1262.6px;top:556.2px" width="7.4" height="4" viewBox="0 0 7.4 4"><path d="M0 0H7.4L3.7 4Z" fill="#000"/></svg>
<div class="b" style="left:1277px;top:548px;width:21px;height:18px;overflow:hidden"><span class="t" style="left:2px;top:1.6px;font-size:12px;line-height:16px;letter-spacing:0.3px">BOL</span></div>
<span class="t" style="font-size:12px;line-height:16px;top:569.3px;color:#0000ff;letter-spacing:-0.216px;text-decoration:underline;left:46.7px;">Click Here</span>
<span class="t" style="font-size:12px;line-height:16px;top:569.3px;color:#000;right:1153.9px;letter-spacing:0.5px;">1</span>
<span class="t" style="font-size:12px;line-height:16px;top:569.3px;color:#000;left:176.3px;">D</span>
<span class="t" style="font-size:12px;line-height:16px;top:569.3px;color:#000;letter-spacing:0.719px;left:236.7px;transform:scaleX(0.94);transform-origin:0 50%;">2681 DANA AVE</span>
<span class="t" style="font-size:12px;line-height:16px;top:569.3px;color:#000;letter-spacing:-0.020px;left:416.7px;transform:scaleX(0.94);transform-origin:0 50%;">BROWNSVILLE</span>
<span class="t" style="font-size:12px;line-height:16px;top:569.3px;color:#000;letter-spacing:0.092px;left:562.5px;transform:scaleX(0.94);transform-origin:0 50%;">TX</span>
<span class="t" style="font-size:12px;line-height:16px;top:569.3px;color:#000;letter-spacing:0.381px;left:594.7px;">(956)312-1331</span>
<span class="t" style="font-size:12px;line-height:16px;top:569.3px;color:#000;left:807.9px;">2</span>
<span class="t" style="font-size:12px;line-height:16px;top:569.3px;color:#000;right:275.1px;">0</span>
<span class="t" style="font-size:12px;line-height:16px;top:587.3px;color:#0000ff;letter-spacing:-0.216px;text-decoration:underline;left:46.7px;">Click Here</span>
<span class="t" style="font-size:12px;line-height:16px;top:587.3px;color:#000;right:1153.9px;letter-spacing:0.5px;">2</span>
<span class="t" style="font-size:12px;line-height:16px;top:587.3px;color:#000;left:176.3px;">P</span>
<span class="t" style="font-size:12px;line-height:16px;top:587.3px;color:#000;letter-spacing:0.231px;left:236.7px;transform:scaleX(0.94);transform-origin:0 50%;">24 HOUR FABRICATION</span>
<span class="t" style="font-size:12px;line-height:16px;top:587.3px;color:#000;letter-spacing:0.196px;left:416.7px;transform:scaleX(0.94);transform-origin:0 50%;">HOUSTON</span>
<span class="t" style="font-size:12px;line-height:16px;top:587.3px;color:#000;letter-spacing:0.092px;left:562.5px;transform:scaleX(0.94);transform-origin:0 50%;">TX</span>
<span class="t" style="font-size:12px;line-height:16px;top:587.3px;color:#000;right:275.1px;">0</span>
<span class="t" style="font-size:12px;line-height:16px;top:605.3px;color:#0000ff;letter-spacing:-0.216px;text-decoration:underline;left:46.7px;">Click Here</span>
<span class="t" style="font-size:12px;line-height:16px;top:605.3px;color:#000;right:1153.9px;letter-spacing:0.5px;">3</span>
<span class="t" style="font-size:12px;line-height:16px;top:605.3px;color:#000;left:176.3px;">D</span>
<span class="t" style="font-size:12px;line-height:16px;top:605.3px;color:#000;letter-spacing:0.719px;left:236.7px;transform:scaleX(0.94);transform-origin:0 50%;">2681 DANA AVE</span>
<span class="t" style="font-size:12px;line-height:16px;top:605.3px;color:#000;letter-spacing:-0.020px;left:416.7px;transform:scaleX(0.94);transform-origin:0 50%;">BROWNSVILLE</span>
<span class="t" style="font-size:12px;line-height:16px;top:605.3px;color:#000;letter-spacing:0.092px;left:562.5px;transform:scaleX(0.94);transform-origin:0 50%;">TX</span>
<span class="t" style="font-size:12px;line-height:16px;top:605.3px;color:#000;letter-spacing:0.381px;left:594.7px;">(956)312-1331</span>
<span class="t" style="font-size:12px;line-height:16px;top:605.3px;color:#000;right:275.1px;">0</span>
<span class="t" style="font-size:12px;line-height:16px;top:623.3px;color:#0000ff;letter-spacing:-0.216px;text-decoration:underline;left:46.7px;">Click Here</span>
<span class="t" style="font-size:12px;line-height:16px;top:623.3px;color:#000;right:1153.9px;letter-spacing:0.5px;">4</span>
<span class="t" style="font-size:12px;line-height:16px;top:623.3px;color:#000;left:176.3px;">P</span>
<span class="t" style="font-size:12px;line-height:16px;top:623.3px;color:#000;letter-spacing:0.231px;left:236.7px;transform:scaleX(0.94);transform-origin:0 50%;">24 HOUR FABRICATION</span>
<span class="t" style="font-size:12px;line-height:16px;top:623.3px;color:#000;letter-spacing:0.196px;left:416.7px;transform:scaleX(0.94);transform-origin:0 50%;">HOUSTON</span>
<span class="t" style="font-size:12px;line-height:16px;top:623.3px;color:#000;letter-spacing:0.092px;left:562.5px;transform:scaleX(0.94);transform-origin:0 50%;">TX</span>
<span class="t" style="font-size:12px;line-height:16px;top:623.3px;color:#000;left:807.9px;">2</span>
<span class="t" style="font-size:12px;line-height:16px;top:623.3px;color:#000;right:275.1px;">0</span>
<span class="t" style="font-size:12px;line-height:16px;top:641.3px;color:#0000ff;letter-spacing:-0.216px;text-decoration:underline;left:46.7px;">Click Here</span>
<span class="t" style="font-size:12px;line-height:16px;top:641.3px;color:#000;right:1153.9px;letter-spacing:0.5px;">5</span>
<span class="t" style="font-size:12px;line-height:16px;top:641.3px;color:#000;left:176.3px;">D</span>
<span class="t" style="font-size:12px;line-height:16px;top:641.3px;color:#000;letter-spacing:0.456px;left:236.7px;transform:scaleX(0.94);transform-origin:0 50%;">TEST FACILITY</span>
<span class="t" style="font-size:12px;line-height:16px;top:641.3px;color:#000;letter-spacing:-0.238px;left:416.7px;transform:scaleX(0.94);transform-origin:0 50%;">CHICAGO</span>
<span class="t" style="font-size:12px;line-height:16px;top:641.3px;color:#000;letter-spacing:0.099px;left:562.5px;transform:scaleX(0.94);transform-origin:0 50%;">IL</span>
<span class="t" style="font-size:12px;line-height:16px;top:641.3px;color:#000;letter-spacing:0.913px;left:594.7px;">(   )   -</span>
<span class="t" style="font-size:12px;line-height:16px;top:641.3px;color:#000;right:275.1px;">0</span>
<span class="t" style="font-size:12px;line-height:16px;top:659.3px;color:#0000ff;letter-spacing:-0.216px;text-decoration:underline;left:46.7px;">Click Here</span>
<span class="t" style="font-size:12px;line-height:16px;top:659.3px;color:#000;right:1153.9px;letter-spacing:0.5px;">6</span>
<span class="t" style="font-size:12px;line-height:16px;top:659.3px;color:#000;left:176.3px;">D</span>
<span class="t" style="font-size:12px;line-height:16px;top:659.3px;color:#000;letter-spacing:0.452px;left:236.7px;transform:scaleX(0.94);transform-origin:0 50%;">2 TEST FACILITY</span>
<span class="t" style="font-size:12px;line-height:16px;top:659.3px;color:#000;letter-spacing:-0.114px;left:416.7px;transform:scaleX(0.94);transform-origin:0 50%;">LOS ANGELES</span>
<span class="t" style="font-size:12px;line-height:16px;top:659.3px;color:#000;letter-spacing:-0.181px;left:562.5px;transform:scaleX(0.94);transform-origin:0 50%;">CA</span>
<span class="t" style="font-size:12px;line-height:16px;top:659.3px;color:#000;letter-spacing:0.913px;left:594.7px;">(   )   -</span>
<span class="t" style="font-size:12px;line-height:16px;top:659.3px;color:#000;right:275.1px;">0</span>
<span class="t" style="font-size:12px;line-height:16px;top:677.3px;color:#0000ff;letter-spacing:-0.216px;text-decoration:underline;left:46.7px;">Click Here</span>
<span class="t" style="font-size:12px;line-height:16px;top:677.3px;color:#000;right:1153.9px;letter-spacing:0.5px;">7</span>
<span class="t" style="font-size:12px;line-height:16px;top:677.3px;color:#000;left:176.3px;">P</span>
<span class="t" style="font-size:12px;line-height:16px;top:677.3px;color:#000;letter-spacing:0.401px;left:236.7px;transform:scaleX(0.94);transform-origin:0 50%;">YTILICAF TSET</span>
<span class="t" style="font-size:12px;line-height:16px;top:677.3px;color:#000;letter-spacing:0.318px;left:416.7px;transform:scaleX(0.94);transform-origin:0 50%;">DETROIT</span>
<span class="t" style="font-size:12px;line-height:16px;top:677.3px;color:#000;letter-spacing:0.500px;left:562.5px;transform:scaleX(0.94);transform-origin:0 50%;">MI</span>
<span class="t" style="font-size:12px;line-height:16px;top:677.3px;color:#000;letter-spacing:0.913px;left:594.7px;">(   )   -</span>
<span class="t" style="font-size:12px;line-height:16px;top:677.3px;color:#000;right:275.1px;">0</span>
<span class="t" style="font-size:12px;line-height:16px;top:695.3px;color:#0000ff;letter-spacing:-0.216px;text-decoration:underline;left:46.7px;">Click Here</span>
<span class="t" style="font-size:12px;line-height:16px;top:695.3px;color:#000;right:1153.9px;letter-spacing:0.5px;">8</span>
<span class="t" style="font-size:12px;line-height:16px;top:695.3px;color:#000;left:176.3px;">P</span>
<span class="t" style="font-size:12px;line-height:16px;top:695.3px;color:#000;letter-spacing:0.370px;left:236.7px;transform:scaleX(0.94);transform-origin:0 50%;">2020 EXHIBITS</span>
<span class="t" style="font-size:12px;line-height:16px;top:695.3px;color:#000;letter-spacing:0.062px;left:416.7px;transform:scaleX(0.94);transform-origin:0 50%;">MISSOURI CITY</span>
<span class="t" style="font-size:12px;line-height:16px;top:695.3px;color:#000;letter-spacing:0.092px;left:562.5px;transform:scaleX(0.94);transform-origin:0 50%;">TX</span>
<span class="t" style="font-size:12px;line-height:16px;top:695.3px;color:#000;letter-spacing:0.913px;left:594.7px;">(   )   -</span>
<span class="t" style="font-size:12px;line-height:16px;top:695.3px;color:#000;right:275.1px;">0</span>
<span class="t" style="font-size:12px;line-height:16px;top:713.3px;color:#0000ff;letter-spacing:-0.216px;text-decoration:underline;left:46.7px;">Click Here</span>
<span class="t" style="font-size:12px;line-height:16px;top:713.3px;color:#000;right:1153.9px;letter-spacing:0.5px;">9</span>
<span class="t" style="font-size:12px;line-height:16px;top:713.3px;color:#000;left:176.3px;">D</span>
<span class="t" style="font-size:12px;line-height:16px;top:713.3px;color:#000;letter-spacing:-0.036px;left:236.7px;transform:scaleX(0.94);transform-origin:0 50%;">B-SIDE PLASTICS</span>
<span class="t" style="font-size:12px;line-height:16px;top:713.3px;color:#000;letter-spacing:-0.229px;left:416.7px;transform:scaleX(0.94);transform-origin:0 50%;">PEARLAND</span>
<span class="t" style="font-size:12px;line-height:16px;top:713.3px;color:#000;letter-spacing:0.092px;left:562.5px;transform:scaleX(0.94);transform-origin:0 50%;">TX</span>
<span class="t" style="font-size:12px;line-height:16px;top:713.3px;color:#000;letter-spacing:0.467px;left:594.7px;">(281)-489-4292</span>
<span class="t" style="font-size:12px;line-height:16px;top:713.3px;color:#000;right:275.1px;">0</span>
<span class="t" style="font-size:12px;line-height:16px;top:731.3px;color:#0000ff;letter-spacing:-0.216px;text-decoration:underline;left:46.7px;">Click Here</span>
<span class="t" style="font-size:12px;line-height:16px;top:731.3px;color:#000;right:1153.9px;letter-spacing:0.5px;">10</span>
<span class="t" style="font-size:12px;line-height:16px;top:731.3px;color:#000;left:176.3px;">P</span>
<span class="t" style="font-size:12px;line-height:16px;top:731.3px;color:#000;letter-spacing:-0.238px;left:236.7px;transform:scaleX(0.94);transform-origin:0 50%;">B &amp; E RESOURCES</span>
<span class="t" style="font-size:12px;line-height:16px;top:731.3px;color:#000;letter-spacing:-0.014px;left:416.7px;transform:scaleX(0.94);transform-origin:0 50%;">BUNA</span>
<span class="t" style="font-size:12px;line-height:16px;top:731.3px;color:#000;letter-spacing:0.092px;left:562.5px;transform:scaleX(0.94);transform-origin:0 50%;">TX</span>
<span class="t" style="font-size:12px;line-height:16px;top:731.3px;color:#000;right:275.1px;">0</span>
<span class="t" style="font-size:12px;line-height:16px;top:749.3px;color:#0000ff;letter-spacing:-0.216px;text-decoration:underline;left:46.7px;">Click Here</span>
<span class="t" style="font-size:12px;line-height:16px;top:749.3px;color:#000;right:1153.9px;letter-spacing:0.5px;">11</span>
<span class="t" style="font-size:12px;line-height:16px;top:749.3px;color:#000;left:176.3px;">P</span>
<span class="t" style="font-size:12px;line-height:16px;top:749.3px;color:#000;letter-spacing:-0.065px;left:236.7px;transform:scaleX(0.94);transform-origin:0 50%;">C-B GEAR &amp; MACHINE</span>
<span class="t" style="font-size:12px;line-height:16px;top:749.3px;color:#000;letter-spacing:0.196px;left:416.7px;transform:scaleX(0.94);transform-origin:0 50%;">HOUSTON</span>
<span class="t" style="font-size:12px;line-height:16px;top:749.3px;color:#000;letter-spacing:0.092px;left:562.5px;transform:scaleX(0.94);transform-origin:0 50%;">TX</span>
<span class="t" style="font-size:12px;line-height:16px;top:749.3px;color:#000;letter-spacing:0.467px;left:594.7px;">(281)-449-0777</span>
<span class="t" style="font-size:12px;line-height:16px;top:749.3px;color:#000;right:275.1px;">0</span>
<svg class="b" style="left:37.6px;top:679.2px" width="6" height="10" viewBox="0 0 6 10"><path d="M0.4 0.4L5.4 5L0.4 9.6Z" fill="#000"/></svg>
<div class="b " style="left:235px;top:674.6px;width:162.4px;height:18px;background:#fff;border:1px dotted #333;"></div>
<span class="t" style="font-size:12px;line-height:16px;top:677.3px;color:#000;letter-spacing:0.401px;left:236.7px;transform:scaleX(0.94);transform-origin:0 50%;">YTILICAF TSET</span>
<div class="b " style="left:398px;top:674.8px;width:15.6px;height:17.4px;background:#fff;"></div>
<svg class="b" style="left:401.6px;top:681px" width="9" height="6" viewBox="0 0 9 6"><path d="M0.6 0.8L4.5 4.7L8.4 0.8" fill="none" stroke="#555" stroke-width="1.1"/></svg>
<div class="b " style="left:1298.4px;top:548px;width:16.6px;height:229px;background:#f0f0f0;"></div>
<div class="b " style="left:1298px;top:765px;width:1px;height:13px;background:#fff;"></div>
<svg class="b" style="left:1302.5px;top:553.6px" width="8" height="7" viewBox="0 0 8 7"><path d="M0.7 5.7L4 2L7.3 5.7" fill="none" stroke="#454545" stroke-width="2"/></svg>
<svg class="b" style="left:1302.5px;top:765.6px" width="8" height="7" viewBox="0 0 8 7"><path d="M0.7 1.3L4 5L7.3 1.3" fill="none" stroke="#454545" stroke-width="2"/></svg>
<div class="b " style="left:1299.2px;top:621.4px;width:14.6px;height:101.4px;background:#cdcdcd;"></div>
<div class="b " style="left:33px;top:777px;width:1266px;height:1px;background:#fff;"></div>
<svg class="b" style="left:37.6px;top:781px" width="7" height="10" viewBox="0 0 7 10"><path d="M5.8 1L1.8 5L5.8 9" fill="none" stroke="#484848" stroke-width="1.9"/></svg>
<svg class="b" style="left:1286.4px;top:781px" width="7" height="10" viewBox="0 0 7 10"><path d="M1.2 1L5.2 5L1.2 9" fill="none" stroke="#484848" stroke-width="1.9"/></svg>
<div class="b " style="left:50px;top:778.6px;width:16.8px;height:14.4px;background:#cdcdcd;"></div>
<span class="t" style="font-size:12.4px;line-height:16px;top:802.4px;color:#ff0000;letter-spacing:0.149px;left:14.5px;transform:scaleX(1.08);transform-origin:0 50%;">N/A</span>
<span class="t" style="font-size:12.4px;line-height:16px;top:821.2px;color:#000;letter-spacing:0.127px;left:14.5px;transform:scaleX(1.1);transform-origin:0 50%;">Last Check Call:</span>
<span class="t" style="font-size:13.4px;line-height:16px;top:804.6px;color:#408080;letter-spacing:0.419px;font-weight:bold;left:1004.5px;transform:scaleX(1.17);transform-origin:0 50%;">Invoiced By Bestl/NB(11/30/2022)</span>
<div class="b " style="left:5.6px;top:849px;width:1313.6px;height:25px;background:#fcfcfc;"></div>
<div class="b " style="left:5.6px;top:849px;width:1313.6px;height:1px;background:#000;"></div>
<div class="b " style="left:10px;top:849px;width:64.6px;height:21px;background:#f0f0f0;border:1px solid #000;border-top:none;"></div>
<span class="t" style="font-size:12.4px;line-height:16px;top:852.2px;color:#000;letter-spacing:0.200px;left:14.5px;transform:scaleX(1.1);transform-origin:0 50%;">Dispatch</span>
<span class="t" style="font-size:12.4px;line-height:16px;top:852.2px;color:#000;letter-spacing:0.145px;left:78.8px;transform:scaleX(1.1);transform-origin:0 50%;">Planning</span>
<span class="t" style="font-size:12.4px;line-height:16px;top:852.2px;color:#000;letter-spacing:0.263px;left:142.5px;transform:scaleX(1.1);transform-origin:0 50%;">Load Board</span>
<span class="t" style="font-size:12.4px;line-height:16px;top:852.2px;color:#000;letter-spacing:0.291px;left:224.5px;transform:scaleX(1.1);transform-origin:0 50%;">Templates</span>
<span class="t" style="font-size:12.4px;line-height:16px;top:852.2px;color:#000;letter-spacing:0.246px;left:298.7px;transform:scaleX(1.1);transform-origin:0 50%;">Carriers</span>
<span class="t" style="font-size:12.4px;line-height:16px;top:852.2px;color:#000;letter-spacing:0.306px;left:358.5px;transform:scaleX(1.1);transform-origin:0 50%;">Customers</span>
<span class="t" style="font-size:12.4px;line-height:16px;top:852.2px;color:#000;letter-spacing:0.132px;left:436.5px;transform:scaleX(1.1);transform-origin:0 50%;">Shippers/Receivers</span>
<span class="t" style="font-size:12.4px;line-height:16px;top:852.2px;color:#000;letter-spacing:0.067px;left:566.5px;transform:scaleX(1.1);transform-origin:0 50%;">Search</span>
<span class="t" style="font-size:12.4px;line-height:16px;top:852.2px;color:#000;letter-spacing:-0.178px;left:619.5px;transform:scaleX(1.1);transform-origin:0 50%;">Find-A-Truck</span>
<span class="t" style="font-size:12.4px;line-height:16px;top:852.2px;color:#000;letter-spacing:-0.270px;left:704.5px;transform:scaleX(1.1);transform-origin:0 50%;">LANE Search</span>
<span class="t" style="font-size:12.4px;line-height:16px;top:852.2px;color:#000;letter-spacing:0.205px;left:793.5px;transform:scaleX(1.1);transform-origin:0 50%;">Loads To Work</span>
<div class="b " style="left:138.4px;top:852px;width:1px;height:14.4px;background:#a0a0a0;"></div>
<div class="b " style="left:220.6px;top:852px;width:1px;height:14.4px;background:#a0a0a0;"></div>
<div class="b " style="left:294.6px;top:852px;width:1px;height:14.4px;background:#a0a0a0;"></div>
<div class="b " style="left:354px;top:852px;width:1px;height:14.4px;background:#a0a0a0;"></div>
<div class="b " style="left:432px;top:852px;width:1px;height:14.4px;background:#a0a0a0;"></div>
<div class="b " style="left:562px;top:852px;width:1px;height:14.4px;background:#a0a0a0;"></div>
<div class="b " style="left:615px;top:852px;width:1px;height:14.4px;background:#a0a0a0;"></div>
<div class="b " style="left:700.5px;top:852px;width:1px;height:14.4px;background:#a0a0a0;"></div>
<div class="b " style="left:789px;top:852px;width:1px;height:14.4px;background:#a0a0a0;"></div>
<div class="b " style="left:4.6px;top:874.6px;width:540px;height:17px;border-top:1px solid #a0a0a0;border-left:1px solid #a0a0a0;border-right:1px solid #fff;border-bottom:1px solid #fff;"></div>
<div class="b " style="left:547px;top:874.6px;width:357.4px;height:17px;border-top:1px solid #a0a0a0;border-left:1px solid #a0a0a0;border-right:1px solid #fff;border-bottom:1px solid #fff;"></div>
<div class="b " style="left:907px;top:874.6px;width:271.4px;height:17px;border-top:1px solid #a0a0a0;border-left:1px solid #a0a0a0;border-right:1px solid #fff;border-bottom:1px solid #fff;"></div>
<div class="b " style="left:1182px;top:874.6px;width:136.4px;height:17px;border-top:1px solid #a0a0a0;border-left:1px solid #a0a0a0;border-right:1px solid #fff;border-bottom:1px solid #fff;"></div>
<span class="t" style="font-size:12.6px;line-height:16px;top:875.9px;color:#000;letter-spacing:-0.062px;left:7.7px;transform:scaleX(1.1);transform-origin:0 50%;">Filter Status = NORMAL (Not Closed)</span>
<span class="t" style="font-size:12.6px;line-height:16px;top:875.9px;color:#000;letter-spacing:0.193px;left:548.5px;transform:scaleX(1.1);transform-origin:0 50%;">Load Count = 349</span>
<span class="t" style="font-size:12.6px;line-height:16px;top:875.9px;color:#000;letter-spacing:0.512px;left:911.5px;transform:scaleX(1.1);transform-origin:0 50%;">23:42:46</span>
<div class="b" style="left:1183px;top:875px;width:133px;height:16px;overflow:hidden"><span class="t" style="left:2px;top:0.9px;font-size:12.6px;line-height:16px;letter-spacing:0.06px;transform:scaleX(1.1);transform-origin:0 50%">PCMiler Online Engage</span></div>
<div class="b " style="left:0px;top:894.6px;width:1324px;height:1.7px;background:#5e5e5e;"></div>
<div class="b " style="left:0px;top:896.3px;width:1324px;height:1px;background:#fcfcfc;"></div>
<div class="b " style="left:0px;top:897.3px;width:1324px;height:19.7px;background:#f0f0f0;"></div>
<div class="b " style="left:1.6px;top:898px;width:301.6px;height:16.6px;border-top:1px solid #a0a0a0;border-left:1px solid #a0a0a0;border-right:1px solid #fff;border-bottom:1px solid #fff;"></div>
<div class="b " style="left:306px;top:898px;width:1016px;height:16.6px;border-top:1px solid #a0a0a0;border-left:1px solid #a0a0a0;border-right:1px solid #fff;border-bottom:1px solid #fff;"></div>
<div class="b " style="left:0px;top:915px;width:1324px;height:2px;background:#4e4e4e;"></div>
<div class="b " style="left:0px;top:915px;width:140px;height:2px;background:#2a2a2a;opacity:.55"></div>
<svg class="b" style="left:1309px;top:901px" width="13" height="13" viewBox="0 0 13 13"><path d="M12 1L1 12M12 5L5 12M12 9L9 12" stroke="#a6a6a6" stroke-width="1.2"/><path d="M12.8 1.8L1.8 12.8M12.8 5.8L5.8 12.8M12.8 9.8L9.8 12.8" stroke="#fff" stroke-width="0.8"/></svg>
</body></html>
